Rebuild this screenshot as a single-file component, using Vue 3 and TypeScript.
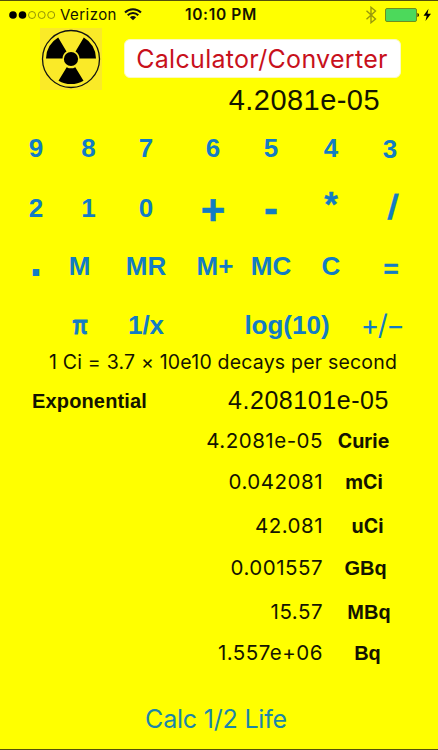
<script setup lang="ts">
interface Key {
  label: string
  kind?: string
}

interface Result {
  value: string
  unit: string
  kind: string
}

const keyRows: Key[][] = [
  [
    { label: '9' },
    { label: '8' },
    { label: '7' },
    { label: '6' },
    { label: '5' },
    { label: '4' },
    { label: '3', kind: 'three' },
  ],
  [
    { label: '2' },
    { label: '1' },
    { label: '0' },
    { label: '+', kind: 'plus' },
    { label: '-', kind: 'minus' },
    { label: '*', kind: 'times' },
    { label: '/', kind: 'divide' },
  ],
  [
    { label: '.', kind: 'point' },
    { label: 'M', kind: 'memory' },
    { label: 'MR' },
    { label: 'M+', kind: 'add' },
    { label: 'MC' },
    { label: 'C' },
    { label: '=', kind: 'equals' },
  ],
  [
    { label: 'π', kind: 'pi' },
    { label: '1/x' },
    { label: 'log(10)' },
    { label: '+/−', kind: 'sign' },
  ],
]

const results: Result[] = [
  { value: '4.2081e-05', unit: 'Curie', kind: 'curie' },
  { value: '0.042081', unit: 'mCi', kind: 'mci' },
  { value: '42.081', unit: 'uCi', kind: 'uci' },
  { value: '0.001557', unit: 'GBq', kind: 'gbq' },
  { value: '15.57', unit: 'MBq', kind: 'mbq' },
  { value: '1.557e+06', unit: 'Bq', kind: 'bq' },
]
</script>

<template>
  <main class="screen">
    <header class="status">
      <svg class="signal" width="47" height="10" viewBox="0 0 47 10">
        <circle cx="4" cy="5" r="3.8" />
        <circle cx="13.5" cy="5" r="3.8" />
        <circle class="off" cx="23" cy="5" r="3.5" />
        <circle class="off" cx="32.7" cy="5" r="3.5" />
        <circle class="off" cx="42.2" cy="5" r="3.5" />
      </svg>
      <span class="carrier">Verizon</span>
      <svg class="wifi" width="18" height="13" viewBox="0 0 18 13">
        <path d="M1 4.5C5.5 .1 12.5 .1 17 4.5" />
        <path d="M3.7 7.3C6.8 4.3 11.2 4.3 14.3 7.3" />
        <path class="tip" d="M9 12.3L5.9 9.2C7.6 7.5 10.4 7.5 12.1 9.2Z" />
      </svg>
      <span class="clock">10:10 PM</span>
      <svg class="bluetooth" width="12" height="18" viewBox="0 0 12 18">
        <path d="M1.5 4.8L10.5 13L6 16.7V1.3L10.5 5L1.5 13.2" />
      </svg>
      <svg class="battery" width="46" height="14" viewBox="0 0 46 14">
        <rect class="case" x=".5" y=".5" width="31" height="13" rx="1.5" />
        <path d="M32.5 5C34.3 5.3 34.3 8.7 32.5 9Z" />
        <path d="M43.5 .8L38.5 7.8H41.7L40.5 13L46 5.8H42.5Z" />
      </svg>
    </header>

    <section class="top">
      <svg class="trefoil" width="62" height="62" viewBox="0 0 62 62">
        <rect width="62" height="62" fill="#faea28" />
        <circle cx="31" cy="31" r="28.5" fill="none" stroke="#111" stroke-width="1.3" />
        <circle cx="31" cy="31" r="7.1" />
        <path d="M22.5 30.5H6A25 25 0 0 1 18.2 9.4L26.5 23.5A9 9 0 0 0 22.5 30.5Z" />
        <path d="M39.5 30.5H56A25 25 0 0 0 43.8 9.4L35.5 23.5A9 9 0 0 1 39.5 30.5Z" />
        <path d="M26.7 39.2L18.5 52.7A25 25 0 0 0 43.5 52.7L35.3 39.2A9 9 0 0 1 26.7 39.2Z" />
      </svg>
      <button class="title">Calculator/Converter</button>
    </section>

    <div class="display">4.2081e-05</div>

    <section class="keypad">
      <div v-for="(row, r) in keyRows" :key="r" class="keys" :class="`keys-${r + 1}`">
        <button v-for="key in row" :key="key.label" class="key">
          <span :class="key.kind">{{ key.label }}</span>
        </button>
      </div>
    </section>

    <p class="note">1 Ci = 3.7 × 10e10 decays per second</p>

    <section class="exponential">
      <span class="exp-label">Exponential</span>
      <span class="exp-value">4.208101e-05</span>
    </section>

    <section class="results">
      <div v-for="item in results" :key="item.unit" class="result" :class="item.kind">
        <span class="value">{{ item.value }}</span>
        <span class="unit">{{ item.unit }}</span>
      </div>
    </section>

    <footer class="footer">
      <button class="half-life">Calc 1/2 Life</button>
    </footer>
  </main>
</template>

<style>
body {
  background: #ffff00;
}
</style>

<style scoped>
.screen {
  box-sizing: border-box;
  width: 438px;
  height: 750px;
  overflow: hidden;
  display: flex;
  flex-direction: column;
  background: #ffff00;
  border-top: 1px solid #55500a;
  border-bottom: 1px solid #55500a;
  color: #141400;
  font-family: Inter, "Liberation Sans", sans-serif;
  white-space: nowrap;
}

button {
  padding: 0;
  border: 0;
  background: none;
  font: inherit;
  color: inherit;
  white-space: nowrap;
}

.status {
  height: 27px;
  flex: none;
  display: flex;
  align-items: center;
  padding-left: 9px;
  font-size: 15px;
  line-height: 27px;
}

.signal {
  flex: none;
}

.off {
  fill: none;
  stroke: #77770a;
  stroke-width: 0.8;
}

.carrier {
  width: 64px;
  margin-left: 4px;
  letter-spacing: 0.45px;
}

.wifi {
  flex: none;
  fill: none;
  stroke: #111;
  stroke-width: 2;
}

.wifi .tip {
  fill: #111;
  stroke: none;
}

.clock {
  width: 180px;
  margin-left: 43px;
  font-size: 15.5px;
  font-weight: 600;
  letter-spacing: 0.65px;
}

.bluetooth {
  flex: none;
  fill: none;
  stroke: #99990c;
  stroke-width: 1.4;
}

.battery {
  flex: none;
  margin-left: 8px;
}

.case {
  fill: #4cd95b;
  stroke: #6e8f1e;
}

.top {
  height: 61px;
  flex: none;
  display: flex;
  align-items: center;
  padding-left: 40px;
}

.trefoil {
  flex: none;
}

.title {
  box-sizing: border-box;
  width: 277px;
  height: 39px;
  margin-left: 21.5px;
  border-radius: 6px;
  border: 1px solid #fafac0;
  background: #fff;
  color: #c8101c;
  font-size: 25px;
  letter-spacing: 0.3px;
  line-height: 38px;
}

.display {
  height: 29px;
  flex: none;
  padding-right: 58px;
  text-align: right;
  font-family: "Liberation Sans", Arial, sans-serif;
  font-size: 29px;
  letter-spacing: 0.45px;
  line-height: 22px;
}

.keypad {
  flex: none;
  font-family: "Liberation Sans", Arial, sans-serif;
  font-size: 26px;
  font-weight: 700;
  color: #127cc4;
}

.keys {
  display: grid;
  grid-template-columns: 52px 53px 62px 72px 44px 76px 42px;
  height: 60px;
  padding-left: 10px;
}

.keys-3 {
  height: 57px;
}

.keys-4 {
  grid-template-columns: 40px 92px 190px 2px;
  height: 59px;
  padding-left: 60px;
}

.key {
  display: flex;
  align-items: center;
  justify-content: center;
}

.key span {
  display: block;
  line-height: 30px;
}

.keys-3 .key span {
  transform: translateY(-1px);
}

.keys-4 .key span {
  transform: translateY(-0.5px);
}

.key .three {
  transform: translateY(1px);
}

.key .plus {
  font-size: 42px;
  -webkit-text-stroke: 0.5px;
  transform: translateY(2px);
}

.key .minus {
  font-size: 42px;
  -webkit-text-stroke: 0.5px;
  transform: translateY(1px);
}

.key .times {
  font-size: 35px;
  -webkit-text-stroke: 0.4px;
  transform: translateY(-4px);
}

.key .divide {
  font-size: 35px;
  -webkit-text-stroke: 0.3px;
  transform: translate(3px, -1.5px) skewX(-5deg);
}

.keys-3 .key .point {
  font-size: 46px;
  transform: translateY(-7px);
}

.keys-3 .key .memory {
  transform: translate(-9px, -1px);
}

.keys-3 .key .add {
  transform: translate(2px, -1px);
}

.keys-3 .key .equals {
  -webkit-text-stroke: 0.4px;
  transform: translate(1px, 2px);
}

.keys-4 .key .pi {
  -webkit-text-stroke: 0.8px;
  transform: scaleX(0.76);
}

.keys-4 .key .sign {
  font-family: Inter, "Liberation Sans", sans-serif;
  font-size: 28px;
  font-weight: 400;
  letter-spacing: -1.5px;
  transform: translate(-1px, -0.5px);
}

.note {
  height: 15px;
  flex: none;
  margin: 0 0 0 49px;
  font-size: 19.5px;
  letter-spacing: 0.2px;
  line-height: 16px;
}

.exponential {
  height: 60px;
  flex: none;
  display: flex;
  align-items: center;
  padding-left: 32px;
  font-family: "Liberation Sans", Arial, sans-serif;
}

.exp-label {
  width: 196px;
  padding-top: 4px;
  font-size: 20px;
  font-weight: 700;
  letter-spacing: 0.15px;
}

.exp-value {
  padding-top: 2px;
  font-size: 25px;
  letter-spacing: 0.55px;
}

.results {
  height: 260px;
  flex: none;
  font-size: 20px;
  line-height: 24px;
}

.result {
  display: grid;
  grid-template-columns: 323px 83px;
  height: 24px;
  margin-bottom: 17px;
}

.result:nth-child(even) {
  margin-bottom: 20px;
}

.value {
  text-align: right;
  font-size: 20.5px;
  font-weight: 400;
  letter-spacing: 0.5px;
}

.unit {
  padding-left: 2px;
  text-align: center;
  font-weight: 700;
}

.curie .unit {
  padding-right: 4px;
  font-size: 19.5px;
}

.mci .unit {
  padding-right: 3px;
  font-size: 19.5px;
}

.uci .unit {
  padding-left: 6px;
  font-size: 19.5px;
}

.gbq .value,
.mbq .value,
.bq .value {
  padding-top: 1px;
}

.gbq .unit,
.mbq .unit,
.bq .unit {
  padding-top: 1px;
  padding-left: 2px;
  font-family: "Liberation Sans", Arial, sans-serif;
}

.mbq .unit {
  padding-left: 9px;
}

.bq .unit {
  padding-left: 6px;
}

.footer {
  flex: 1;
  display: flex;
  align-items: center;
  justify-content: center;
  padding-right: 6px;
}

.half-life {
  color: #1b86a8;
  font-size: 25px;
  letter-spacing: -0.2px;
}
</style>
